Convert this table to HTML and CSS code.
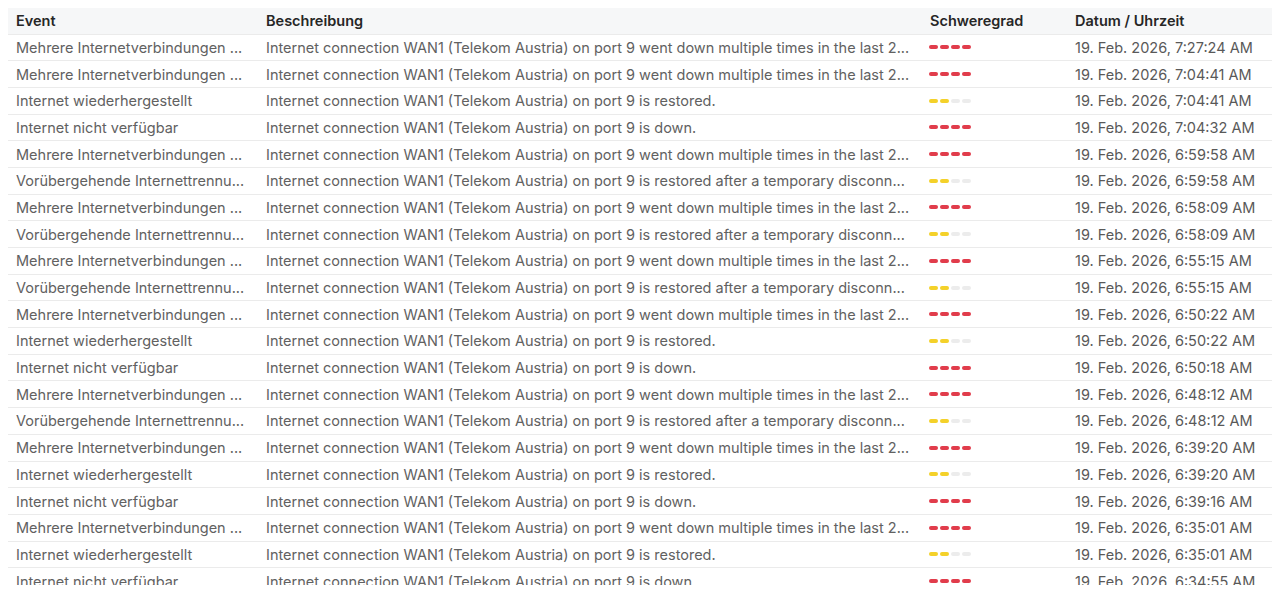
FILE: index.html
```html
<!DOCTYPE html>
<html lang="de">
<head>
<meta charset="utf-8">
<title>Events</title>
<link rel="stylesheet" href="styles.css">
</head>
<body>
<div class="wrap">
<div class="scroller">
<table class="events">
<thead>
<tr><th class="c-event">Event</th><th class="c-desc">Beschreibung</th><th class="c-sev">Schweregrad</th><th class="c-date">Datum / Uhrzeit</th></tr>
</thead>
<tbody>
<tr><td>Mehrere Internetverbindungen ...</td><td>Internet connection WAN1 (Telekom Austria) on port 9 went down multiple times in the last 2...</td><td><span class="sev high"><i></i><i></i><i></i><i></i></span></td><td class="date">19. Feb. 2026, 7:27:24 AM</td></tr>
<tr><td>Mehrere Internetverbindungen ...</td><td>Internet connection WAN1 (Telekom Austria) on port 9 went down multiple times in the last 2...</td><td><span class="sev high"><i></i><i></i><i></i><i></i></span></td><td class="date">19. Feb. 2026, 7:04:41 AM</td></tr>
<tr><td>Internet wiederhergestellt</td><td>Internet connection WAN1 (Telekom Austria) on port 9 is restored.</td><td><span class="sev low"><i></i><i></i><i></i><i></i></span></td><td class="date">19. Feb. 2026, 7:04:41 AM</td></tr>
<tr><td>Internet nicht verfügbar</td><td>Internet connection WAN1 (Telekom Austria) on port 9 is down.</td><td><span class="sev high"><i></i><i></i><i></i><i></i></span></td><td class="date">19. Feb. 2026, 7:04:32 AM</td></tr>
<tr><td>Mehrere Internetverbindungen ...</td><td>Internet connection WAN1 (Telekom Austria) on port 9 went down multiple times in the last 2...</td><td><span class="sev high"><i></i><i></i><i></i><i></i></span></td><td class="date">19. Feb. 2026, 6:59:58 AM</td></tr>
<tr><td>Vorübergehende Internettrennu...</td><td>Internet connection WAN1 (Telekom Austria) on port 9 is restored after a temporary disconn...</td><td><span class="sev low"><i></i><i></i><i></i><i></i></span></td><td class="date">19. Feb. 2026, 6:59:58 AM</td></tr>
<tr><td>Mehrere Internetverbindungen ...</td><td>Internet connection WAN1 (Telekom Austria) on port 9 went down multiple times in the last 2...</td><td><span class="sev high"><i></i><i></i><i></i><i></i></span></td><td class="date">19. Feb. 2026, 6:58:09 AM</td></tr>
<tr><td>Vorübergehende Internettrennu...</td><td>Internet connection WAN1 (Telekom Austria) on port 9 is restored after a temporary disconn...</td><td><span class="sev low"><i></i><i></i><i></i><i></i></span></td><td class="date">19. Feb. 2026, 6:58:09 AM</td></tr>
<tr><td>Mehrere Internetverbindungen ...</td><td>Internet connection WAN1 (Telekom Austria) on port 9 went down multiple times in the last 2...</td><td><span class="sev high"><i></i><i></i><i></i><i></i></span></td><td class="date">19. Feb. 2026, 6:55:15 AM</td></tr>
<tr><td>Vorübergehende Internettrennu...</td><td>Internet connection WAN1 (Telekom Austria) on port 9 is restored after a temporary disconn...</td><td><span class="sev low"><i></i><i></i><i></i><i></i></span></td><td class="date">19. Feb. 2026, 6:55:15 AM</td></tr>
<tr><td>Mehrere Internetverbindungen ...</td><td>Internet connection WAN1 (Telekom Austria) on port 9 went down multiple times in the last 2...</td><td><span class="sev high"><i></i><i></i><i></i><i></i></span></td><td class="date">19. Feb. 2026, 6:50:22 AM</td></tr>
<tr><td>Internet wiederhergestellt</td><td>Internet connection WAN1 (Telekom Austria) on port 9 is restored.</td><td><span class="sev low"><i></i><i></i><i></i><i></i></span></td><td class="date">19. Feb. 2026, 6:50:22 AM</td></tr>
<tr><td>Internet nicht verfügbar</td><td>Internet connection WAN1 (Telekom Austria) on port 9 is down.</td><td><span class="sev high"><i></i><i></i><i></i><i></i></span></td><td class="date">19. Feb. 2026, 6:50:18 AM</td></tr>
<tr><td>Mehrere Internetverbindungen ...</td><td>Internet connection WAN1 (Telekom Austria) on port 9 went down multiple times in the last 2...</td><td><span class="sev high"><i></i><i></i><i></i><i></i></span></td><td class="date">19. Feb. 2026, 6:48:12 AM</td></tr>
<tr><td>Vorübergehende Internettrennu...</td><td>Internet connection WAN1 (Telekom Austria) on port 9 is restored after a temporary disconn...</td><td><span class="sev low"><i></i><i></i><i></i><i></i></span></td><td class="date">19. Feb. 2026, 6:48:12 AM</td></tr>
<tr><td>Mehrere Internetverbindungen ...</td><td>Internet connection WAN1 (Telekom Austria) on port 9 went down multiple times in the last 2...</td><td><span class="sev high"><i></i><i></i><i></i><i></i></span></td><td class="date">19. Feb. 2026, 6:39:20 AM</td></tr>
<tr><td>Internet wiederhergestellt</td><td>Internet connection WAN1 (Telekom Austria) on port 9 is restored.</td><td><span class="sev low"><i></i><i></i><i></i><i></i></span></td><td class="date">19. Feb. 2026, 6:39:20 AM</td></tr>
<tr><td>Internet nicht verfügbar</td><td>Internet connection WAN1 (Telekom Austria) on port 9 is down.</td><td><span class="sev high"><i></i><i></i><i></i><i></i></span></td><td class="date">19. Feb. 2026, 6:39:16 AM</td></tr>
<tr><td>Mehrere Internetverbindungen ...</td><td>Internet connection WAN1 (Telekom Austria) on port 9 went down multiple times in the last 2...</td><td><span class="sev high"><i></i><i></i><i></i><i></i></span></td><td class="date">19. Feb. 2026, 6:35:01 AM</td></tr>
<tr><td>Internet wiederhergestellt</td><td>Internet connection WAN1 (Telekom Austria) on port 9 is restored.</td><td><span class="sev low"><i></i><i></i><i></i><i></i></span></td><td class="date">19. Feb. 2026, 6:35:01 AM</td></tr>
<tr><td>Internet nicht verfügbar</td><td>Internet connection WAN1 (Telekom Austria) on port 9 is down.</td><td><span class="sev high"><i></i><i></i><i></i><i></i></span></td><td class="date">19. Feb. 2026, 6:34:55 AM</td></tr>
</tbody>
</table>
</div>
</div>
</body>
</html>
```
FILE: styles.css
```css
html, body {
  margin: 0;
  padding: 0;
  background: #ffffff;
}
body {
  font-family: Inter, "Noto Sans", sans-serif;
  font-size: 14.5px;
  color: #616161;
}
.wrap {
  height: 599px;
  overflow: hidden;
  padding: 8px 8px 0 8px;
  box-sizing: border-box;
}
.scroller {
  height: 577px;
  overflow: hidden;
}
.events {
  width: 1264px;
  border-collapse: collapse;
  table-layout: fixed;
}
.events th,
.events td {
  box-sizing: border-box;
  padding: 0 8px;
  border-bottom: 1px solid #ebebeb;
  white-space: nowrap;
  overflow: hidden;
}
.c-event { width: 250px; }
.c-desc { width: 664px; }
.c-sev { width: 145px; }
.c-date { width: 205px; }
.events th {
  background: #f6f7f8;
  color: #262626;
  font-weight: 600;
  text-align: left;
  height: 26px;
}
.events td {
  height: 26.7px;
}
.events td.date {
  color: #595959;
}
.sev {
  display: flex;
  gap: 2px;
  align-items: center;
  margin-left: -1px;
}
.sev i {
  display: block;
  width: 9px;
  height: 4px;
  border-radius: 2px;
  background: #ececec;
}
.sev.high i { background: #e13c4b; }
.sev.low i:nth-child(1),
.sev.low i:nth-child(2) { background: #f4d12a; }
```
